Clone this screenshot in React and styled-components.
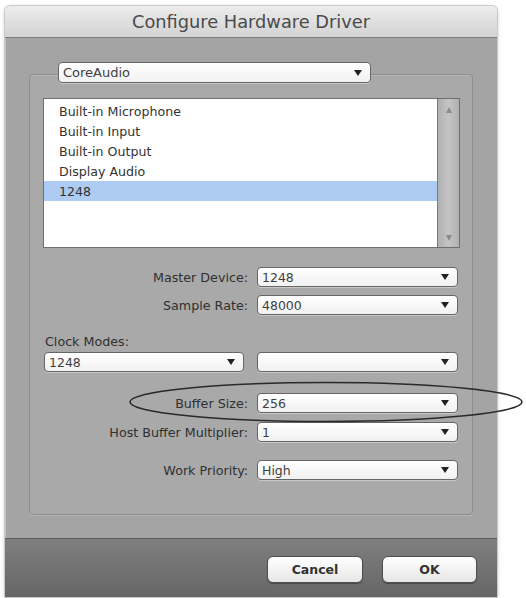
import React from "react";
import styled, { createGlobalStyle } from "styled-components";

const Global = createGlobalStyle`
  html, body { margin: 0; padding: 0; background: #ffffff; }
  body { font-family: "DejaVu Sans", "Liberation Sans", sans-serif; }
`;

const Stage = styled.div`
  position: relative;
  width: 526px;
  height: 598px;
  overflow: hidden;
  padding: 6px 0 0 5px;
  box-sizing: border-box;
`;

const Window = styled.div`
  width: 492px;
  height: 591px;
  display: flex;
  flex-direction: column;
  border-radius: 5px 5px 0 0;
  overflow: hidden;
  box-shadow: 0 0 0 1px #c9c9c9, 0 1px 4px rgba(0, 0, 0, 0.25);
`;

const TitleBar = styled.div`
  height: 31px;
  flex: none;
  display: flex;
  align-items: center;
  justify-content: center;
  background: linear-gradient(#ececec, #d3d3d3);
  border-bottom: 1px solid #7c7c7c;
  color: #4a4a4a;
  font-size: 17.8px;
`;

const Body = styled.div`
  flex: 1;
  background: #a4a4a4;
  padding: 24px 24px 0 23px;
  display: flex;
  flex-direction: column;
  border-left: 1px solid #c2c2c2;
`;

const Popup = styled.div`
  box-sizing: border-box;
  width: ${(p) => p.$w}px;
  height: ${(p) => p.$h || 20}px;
  border: 1px solid #666;
  border-radius: 4px;
  background: linear-gradient(#ffffff, #f1f1f1);
  box-shadow: 0 1px 0 rgba(255, 255, 255, 0.35);
  display: flex;
  align-items: center;
  justify-content: space-between;
  padding: 0 8px 0 4px;
  font-size: 12.5px;
  color: #3f3f3f;
  flex: none;
`;

const Arrow = styled.span`
  width: 0;
  height: 0;
  border-left: 4px solid transparent;
  border-right: 4px solid transparent;
  border-top: 6px solid #222;
`;

const DriverPopup = styled(Popup)`
  margin-left: 29px;
  margin-bottom: -9px;
  position: relative;
  z-index: 1;
  font-size: 13px;
`;

const Group = styled.div`
  height: 441px;
  box-sizing: border-box;
  background: #a9a9a9;
  border: 1px solid #8c8c8c;
  border-radius: 4px;
  box-shadow: inset 0 1px 0 #b9b9b9, 0 1px 0 #b4b4b4;
  padding: 23px 12px 0 13px;
  display: flex;
  flex-direction: column;
`;

const List = styled.div`
  height: 150px;
  box-sizing: border-box;
  border: 1px solid #6f6f6f;
  background: #fff;
  display: flex;
`;

const Items = styled.div`
  flex: 1;
  padding-top: 2px;
`;

const Item = styled.div`
  height: 20px;
  display: flex;
  align-items: center;
  padding-left: 15px;
  font-size: 12.6px;
  color: #333;
  background: ${(p) => (p.$selected ? "#aecbf4" : "transparent")};
`;

const Scroll = styled.div`
  width: 22px;
  box-sizing: border-box;
  border-left: 1px solid #7a7a7a;
  background: linear-gradient(90deg, #b0b0b0, #c4c4c4 50%, #b0b0b0);
  display: flex;
  flex-direction: column;
  justify-content: space-between;
  align-items: center;
  padding: 8px 0 6px;
`;

const ScrollArrow = styled.span`
  width: 0;
  height: 0;
  border-left: 3.5px solid transparent;
  border-right: 3.5px solid transparent;
  ${(p) =>
    p.$up ? "border-bottom: 6px solid #8a8a8a;" : "border-top: 6px solid #8a8a8a;"}
`;

const Form = styled.div`
  display: grid;
  grid-template-columns: 205px 201px;
  column-gap: 9px;
  align-items: center;
`;

const Label = styled.div`
  text-align: right;
  font-size: 12.7px;
  color: #303030;
  white-space: nowrap;
`;

const Row = styled(Form)`
  margin-top: ${(p) => p.$mt}px;
`;

const ClockLabel = styled.div`
  margin-top: 19px;
  font-size: 12.7px;
  color: #303030;
  padding-left: 2px;
`;

const ClockRow = styled.div`
  display: flex;
  gap: 13px;
  margin-top: 3px;
  padding-left: 1px;
`;

const Footer = styled.div`
  height: 59px;
  flex: none;
  box-sizing: border-box;
  background: linear-gradient(#7f7f7f, #666666);
  border-top: 1px solid #5c5c5c;
  display: flex;
  justify-content: flex-end;
  align-items: flex-start;
  gap: 19px;
  padding: 17px 20px 0 0;
`;

const Button = styled.button`
  width: ${(p) => p.$w}px;
  height: 27px;
  border: 1px solid #4f4f4f;
  border-radius: 6px;
  background: linear-gradient(#ffffff, #e6e6e6);
  box-shadow: 0 1px 1px rgba(0, 0, 0, 0.35);
  font-family: "DejaVu Sans", "Liberation Sans", sans-serif;
  font-weight: bold;
  font-size: 12.5px;
  color: #333;
  padding: 0;
`;

const Annotation = styled.svg`
  position: absolute;
  left: 0;
  top: 0;
  pointer-events: none;
`;

const devices = ["Built-in Microphone", "Built-in Input", "Built-in Output", "Display Audio", "1248"];

const Select = ({ value, w }) => (
  <Popup $w={w}>
    <span>{value}</span>
    <Arrow />
  </Popup>
);

export default function App() {
  return (
    <Stage>
      <Global />
      <Window>
        <TitleBar>Configure Hardware Driver</TitleBar>
        <Body>
          <DriverPopup $w={313} $h={21}>
            <span>CoreAudio</span>
            <Arrow />
          </DriverPopup>
          <Group>
            <List>
              <Items>
                {devices.map((d) => (
                  <Item key={d} $selected={d === "1248"}>
                    {d}
                  </Item>
                ))}
              </Items>
              <Scroll>
                <ScrollArrow $up />
                <ScrollArrow />
              </Scroll>
            </List>
            <Row $mt={19}>
              <Label>Master Device:</Label>
              <Select value="1248" w={201} />
            </Row>
            <Row $mt={8}>
              <Label>Sample Rate:</Label>
              <Select value="48000" w={201} />
            </Row>
            <ClockLabel>Clock Modes:</ClockLabel>
            <ClockRow>
              <Select value="1248" w={200} />
              <Select value="" w={201} />
            </ClockRow>
            <Row $mt={21}>
              <Label>Buffer Size:</Label>
              <Select value="256" w={201} />
            </Row>
            <Row $mt={9}>
              <Label>Host Buffer Multiplier:</Label>
              <Select value="1" w={201} />
            </Row>
            <Row $mt={18}>
              <Label>Work Priority:</Label>
              <Select value="High" w={201} />
            </Row>
          </Group>
        </Body>
        <Footer>
          <Button $w={96}>Cancel</Button>
          <Button $w={95}>OK</Button>
        </Footer>
      </Window>
      <Annotation width="526" height="598">
        <ellipse cx="326" cy="402" rx="196" ry="19.5" fill="none" stroke="#2a2a2a" strokeWidth="1.6" />
      </Annotation>
    </Stage>
  );
}
